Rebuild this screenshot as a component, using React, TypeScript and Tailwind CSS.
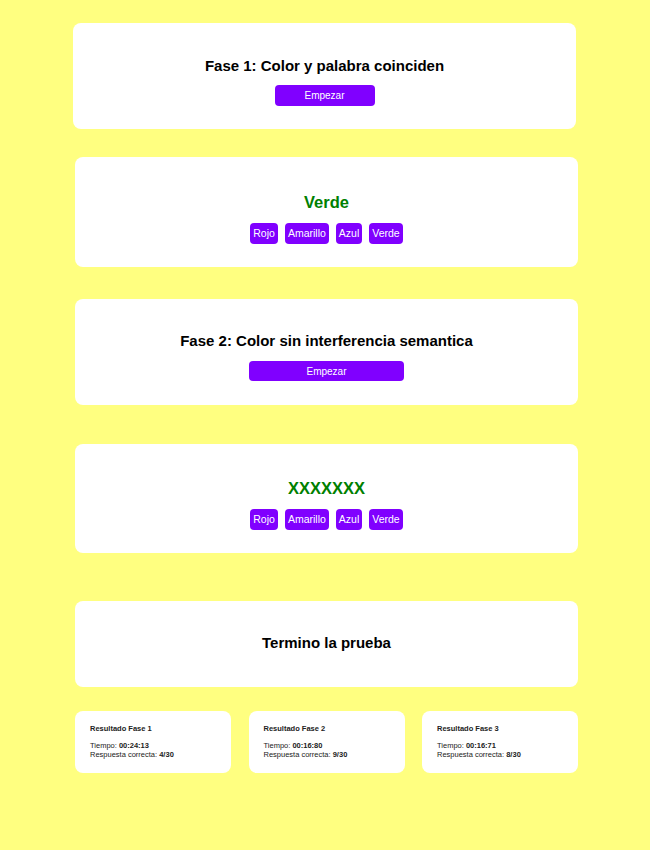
const font = { fontFamily: '"Liberation Sans", Arial, sans-serif' };

const colores = ["Rojo", "Amarillo", "Azul", "Verde"];

function Opciones() {
  return (
    <div className="flex justify-center gap-[7px]">
      {colores.map((c) => (
        <button
          key={c}
          className="h-[21px] px-[3px] rounded-[4px] bg-[#8000ff] text-white text-[10.5px] leading-none"
        >
          {c}
        </button>
      ))}
    </div>
  );
}

function Resultado({ n, tiempo, correctas }: { n: number; tiempo: string; correctas: string }) {
  return (
    <div className="w-[156px] h-[62px] bg-white rounded-[8px] pl-[15px] pt-[13px] text-[7.5px] leading-[9px] text-[#222]">
      <div className="font-bold mb-[8px]">Resultado Fase {n}</div>
      <div>
        Tiempo: <b>{tiempo}</b>
      </div>
      <div>
        Respuesta correcta: <b>{correctas}</b>
      </div>
    </div>
  );
}

export default function App() {
  return (
    <div className="min-h-[850px] bg-[#ffff80] pt-[23px]" style={font}>
      <div className="ml-[73px] w-[503px] bg-white rounded-[8px] pt-[33px] pb-[23px] flex flex-col items-center">
        <h1 className="text-[15px] leading-[20px] font-bold text-black">Fase 1: Color y palabra coinciden</h1>
        <button className="mt-[9px] w-[100px] h-[21px] rounded-[4px] bg-[#8000ff] text-white text-[10px]">
          Empezar
        </button>
      </div>

      <div className="mt-[28px] ml-[75px] w-[503px] bg-white rounded-[8px] pt-[34px] pb-[23px] flex flex-col items-center">
        <div className="text-[16.5px] leading-[22px] font-bold text-[#008000] mb-[10px]">Verde</div>
        <Opciones />
      </div>

      <div className="mt-[32px] ml-[75px] w-[503px] bg-white rounded-[8px] pt-[32px] pb-[24px] flex flex-col items-center">
        <h1 className="text-[15px] leading-[20px] font-bold text-black">Fase 2: Color sin interferencia semantica</h1>
        <button className="mt-[10px] w-[155px] h-[20px] rounded-[4px] bg-[#8000ff] text-white text-[10px]">
          Empezar
        </button>
      </div>

      <div className="mt-[39px] ml-[75px] w-[503px] bg-white rounded-[8px] pt-[33px] pb-[23px] flex flex-col items-center">
        <div className="text-[16.5px] leading-[22px] font-bold text-[#008000] mb-[10px]">XXXXXXX</div>
        <Opciones />
      </div>

      <div className="mt-[48px] ml-[75px] w-[503px] bg-white rounded-[8px] pt-[32px] pb-[34px] flex flex-col items-center">
        <h1 className="text-[15px] leading-[20px] font-bold text-black">Termino la prueba</h1>
      </div>

      <div className="mt-[24px] ml-[75px] w-[503px] flex justify-between">
        <Resultado n={1} tiempo="00:24:13" correctas="4/30" />
        <Resultado n={2} tiempo="00:16:80" correctas="9/30" />
        <Resultado n={3} tiempo="00:16:71" correctas="8/30" />
      </div>
    </div>
  );
}
